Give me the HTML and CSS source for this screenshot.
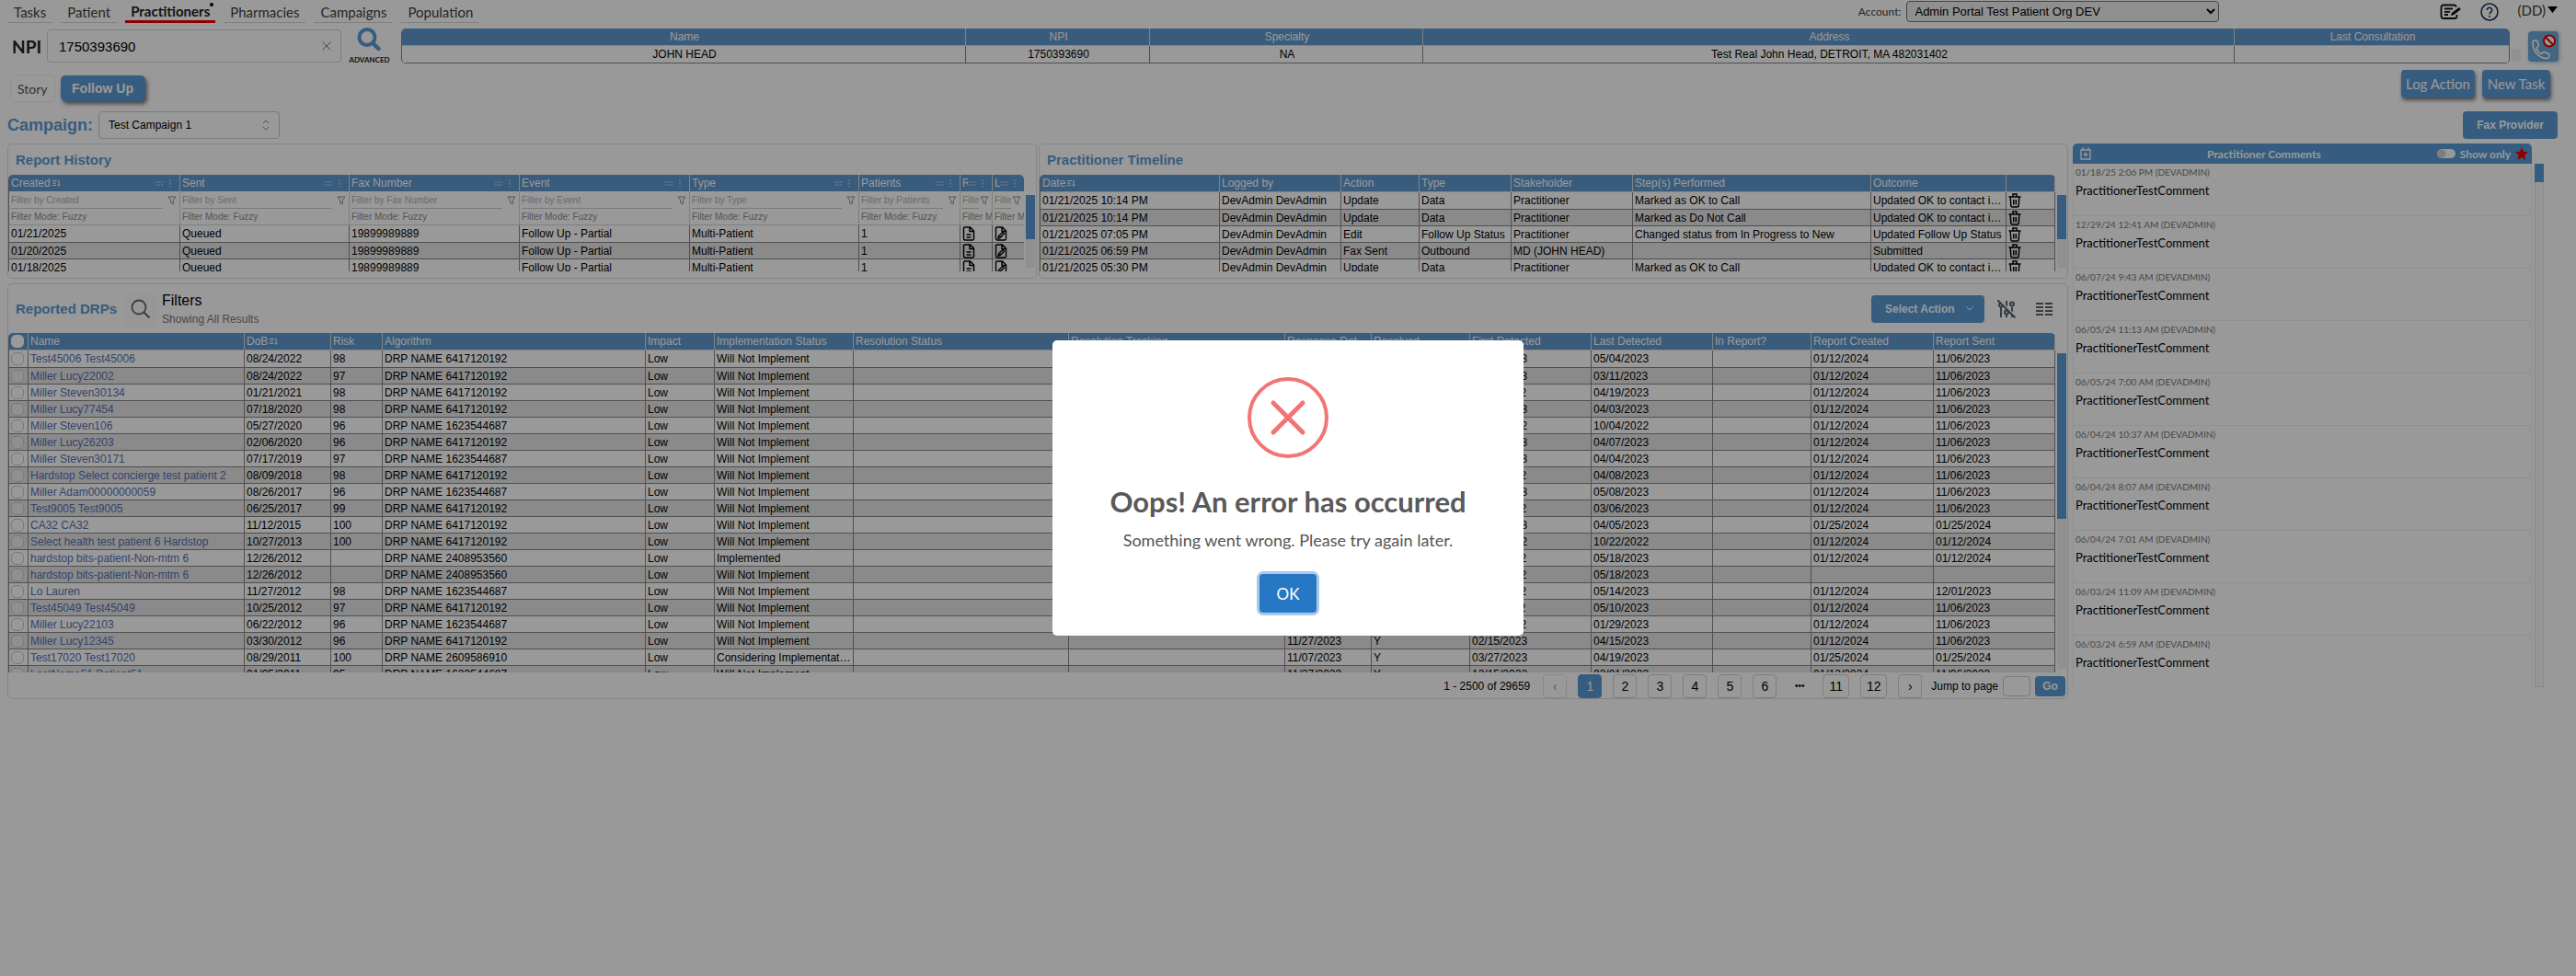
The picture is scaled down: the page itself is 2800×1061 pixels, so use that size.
FILE: index.html
```html
<!DOCTYPE html>
<html lang="en">
<head>
<meta charset="utf-8">
<title>Practitioners - Follow Up</title>
<link rel="stylesheet" href="styles.css">
</head>
<body>
<svg class="sprite" aria-hidden="true">
  <symbol id="i-funnel" viewBox="0 0 10 10"><path d="M1 1h8L6.300 4.800v4l-2.600-1.300V4.800z" fill="none" stroke="currentColor" stroke-linejoin="round"/></symbol>
  <symbol id="i-grip" viewBox="0 0 18 9"><g fill="currentColor"><path d="M0 2h2v2H0zM3 2h2v2H3zM6 2h2v2H6zM0 5h2v2H0zM3 5h2v2H3zM6 5h2v2H6zM15 0h2v2h-2zM15 3.500h2v2h-2zM15 7h2v2h-2z"/></g></symbol>
  <symbol id="i-sort" viewBox="0 0 9 8"><path d="M0 1.500h5M0 4h4M0 6.500h4M7 .5v6.500M5.300 5.500L7 7.300l1.700-1.800" fill="none" stroke="currentColor"/></symbol>
  <symbol id="i-doc" viewBox="0 0 14 16"><path d="M2.500 1h6L12.500 5v8.500a1.500 1.500 0 0 1-1.500 1.500H3A1.500 1.500 0 0 1 1.500 13.500V2A1 1 0 0 1 2.500 1zM8 1v4.500h4.500M4.500 9h5M4.500 12h5" fill="none" stroke="currentColor" stroke-width="1.500"/></symbol>
  <symbol id="i-docpen" viewBox="0 0 14 16"><path d="M2.500 1h6L12.500 5v8.500a1.500 1.500 0 0 1-1.500 1.500H3A1.500 1.500 0 0 1 1.500 13.500V2A1 1 0 0 1 2.500 1zM8 1v4.500h4.500M4 13l.5-2.500L9 6.500l1.500 1.500L6 12.500zM4 13l3-2" fill="none" stroke="currentColor" stroke-width="1.400"/></symbol>
  <symbol id="i-trash" viewBox="0 0 14 16"><path d="M0.500 4h13M5 3.500V1h4v2.500M2.200 4.500l.6 9.200a1.500 1.500 0 0 0 1.500 1.300h5.400a1.500 1.500 0 0 0 1.500-1.300l.6-9.200M5.700 7v5.500M8.300 7v5.500" fill="none" stroke="currentColor" stroke-width="1.500"/></symbol>
</svg>

<header class="topbar">
  <nav class="tabs">
    <a href="#tasks">Tasks</a>
    <a href="#patient">Patient</a>
    <a href="#practitioners" class="active">Practitioners</a>
    <a href="#pharmacies">Pharmacies</a>
    <a href="#campaigns">Campaigns</a>
    <a href="#population">Population</a>
  </nav>
  <div class="account">
    <label for="account">Account:</label>
    <select id="account"><option>Admin Portal Test Patient Org DEV</option></select>
  </div>
  <div class="tools">
    <button class="icon-btn" aria-label="Notes"><svg width="24" height="18" viewBox="0 0 24 18"><path d="M18 3.500A3 3 0 0 0 15.500 1.500H4A2.500 2.500 0 0 0 1.500 4v9.500A2.500 2.500 0 0 0 4 16h12a2.500 2.500 0 0 0 2.500-2.500V12M5 5.500h9M5 8.800h6M5 12h4" fill="none" stroke="#111" stroke-width="1.800"/><path d="M12 13l.8-3L21 4l1.800 2.200L15 12.300z" fill="#111"/></svg></button>
    <button class="icon-btn" aria-label="Help"><svg width="20" height="20" viewBox="0 0 20 20"><circle cx="10" cy="10" r="9" fill="none" stroke="#1d2c55" stroke-width="1.500"/><path d="M7.300 8a2.700 2.700 0 1 1 4.200 2.200c-1 .7-1.500 1-1.500 2.100" fill="none" stroke="#1d2c55" stroke-width="1.500"/><circle cx="10" cy="14.700" r="1" fill="#1d2c55"/></svg></button>
    <button class="user">(DD)<svg width="11" height="7" viewBox="0 0 11 7"><path d="M0 0h11L5.500 7z" fill="#000"/></svg></button>
  </div>
</header>

<section class="lookup">
  <label class="npi-label" for="npi">NPI</label>
  <div class="npi-box"><input id="npi" value="1750393690"><button class="icon-btn" aria-label="Clear"><svg width="10" height="10" viewBox="0 0 10 10"><path d="M.5.5l9 9M9.500.5l-9 9" stroke="#777" fill="none"/></svg></button></div>
  <button class="advanced"><svg width="27" height="26" viewBox="0 0 27 26"><circle cx="11" cy="10.500" r="8.500" fill="none" stroke="#5b9bd5" stroke-width="4"/><path d="M17.500 17l6 6" stroke="#5b9bd5" stroke-width="4.500" stroke-linecap="round"/></svg><span>ADVANCED</span></button>
  <table class="grid summary">
    <colgroup><col style="width:613px"><col style="width:200px"><col style="width:297px"><col style="width:882px"><col style="width:298px"></colgroup>
    <thead><tr><th>Name</th><th>NPI</th><th>Specialty</th><th>Address</th><th>Last Consultation</th></tr></thead>
    <tbody><tr><td>JOHN HEAD</td><td>1750393690</td><td>NA</td><td>Test Real John Head, DETROIT, MA 482031402</td><td></td></tr></tbody>
  </table>
  <span class="stub"></span>
  <button class="phone" aria-label="Do not call"><svg width="33" height="33" viewBox="0 0 33 33"><path d="M5 11c0-1 4-1.500 5-.5l1.500 5c0 1-2.500 2-2.500 3 1 3 3 5 5 6 1 0 2-2.500 3.500-2l5 2c1 1 0 5-1.500 5C11 29.500 4.500 21 5 11z" fill="none" stroke="#fff" stroke-width="1.600" stroke-linejoin="round"/><circle cx="23" cy="10.500" r="6" fill="#fff" stroke="#e00000" stroke-width="2"/><path d="M19 6.500l8 8" stroke="#e00000" stroke-width="2"/></svg></button>
</section>

<section class="modes">
  <button class="mode">Story</button>
  <button class="mode on">Follow Up</button>
  <button class="action push">Log Action</button>
  <button class="action">New Task</button>
</section>

<section class="campaign">
  <label for="campaign">Campaign:</label>
  <div class="select-box"><select id="campaign"><option>Test Campaign 1</option></select><svg width="8" height="12" viewBox="0 0 8 12"><path d="M1 4l3-3 3 3M1 8l3 3 3-3" fill="none" stroke="#888"/></svg></div>
  <button class="solid push fax">Fax Provider</button>
</section>

<main class="board">
  <section class="panel">
    <h2>Report History</h2>
    <div class="pane short">
      <div class="clip">
        <table class="grid" id="history">
          <colgroup><col style="width:186px"><col style="width:184px"><col style="width:185px"><col style="width:185px"><col style="width:184px"><col style="width:110px"><col style="width:35px"><col style="width:35px"></colgroup>
          <thead></thead><tbody></tbody>
        </table>
      </div>
      <div class="bar"><i class="thumb-s"></i></div>
    </div>
  </section>

  <section class="panel">
    <h2>Practitioner Timeline</h2>
    <div class="pane short">
      <div class="clip">
        <table class="grid" id="timeline">
          <colgroup><col style="width:195px"><col style="width:132px"><col style="width:85px"><col style="width:100px"><col style="width:132px"><col style="width:259px"><col style="width:147px"><col style="width:53px"></colgroup>
          <thead><tr><th>Date<svg class="sort"><use href="#i-sort"/></svg></th><th>Logged by</th><th>Action</th><th>Type</th><th>Stakeholder</th><th>Step(s) Performed</th><th>Outcome</th><th></th></tr></thead>
          <tbody></tbody>
        </table>
      </div>
      <div class="bar"><i class="thumb-s"></i></div>
    </div>
  </section>

  <aside class="comments">
    <div class="comments-main">
      <header>
        <button class="icon-btn" aria-label="Add comment"><svg width="12" height="14" viewBox="0 0 12 14"><path d="M1 3h10v10H1zM3 0v3M9 0v3M6 5.500v5M3.500 8h5" fill="none" stroke="#fff" stroke-width="1.300"/></svg></button>
        <strong>Practitioner Comments</strong>
        <label><input type="checkbox" class="toggle">Show only</label>
        <svg width="14" height="14" viewBox="0 0 14 14"><path d="M7 0l2 4.800 5 .4-3.800 3.300L11.400 14 7 11.100 2.600 14l1.200-5.500L0 5.200l5-.4z" fill="#f00000"/></svg>
      </header>
      <ul id="comments"></ul>
    </div>
    <div class="comments-bar"><i></i></div>
  </aside>

  <section class="panel wide">
    <div class="drp-head">
      <h2>Reported DRPs</h2>
      <button class="search" aria-label="Search"><svg width="22" height="22" viewBox="0 0 22 22"><circle cx="9" cy="9" r="7.500" fill="none" stroke="#666" stroke-width="1.800"/><path d="M14.500 14.500l6 6" stroke="#666" stroke-width="2"/></svg></button>
      <div class="filters"><b>Filters</b><span>Showing All Results</span></div>
      <button class="solid push select-action">Select Action<svg width="8" height="5" viewBox="0 0 8 5"><path d="M.5.5L4 4 7.500.5" fill="none" stroke="#fff"/></svg></button>
      <button class="icon-btn" aria-label="Clear filters"><svg width="20" height="20" viewBox="0 0 20 20" fill="none" stroke="#5c636b" stroke-width="2"><path d="M4 7.500V19M4 1v1M10 1v10M10 16v3M16 8v11"/><circle cx="4" cy="5.500" r="2"/><circle cx="10" cy="13.500" r="2"/><circle cx="16" cy="4.500" r="2"/><path d="M2 0l18 18" stroke="#fff"/><path d="M0 0l19.500 19.500"/></svg></button>
      <button class="icon-btn" aria-label="Columns"><svg width="18" height="14" viewBox="0 0 18 14"><path d="M0 1h8M0 5h8M0 9h8M0 13h8M10 1h8M10 5h8M10 9h8M10 13h8" stroke="#5c636b" stroke-width="2"/></svg></button>
    </div>
    <div class="pane tall">
      <div class="clip">
        <table class="grid" id="drps">
          <colgroup><col style="width:21px"><col style="width:235px"><col style="width:94px"><col style="width:56px"><col style="width:286px"><col style="width:75px"><col style="width:151px"><col style="width:234px"><col style="width:235px"><col style="width:94px"><col style="width:107px"><col style="width:132px"><col style="width:132px"><col style="width:107px"><col style="width:133px"><col style="width:132px"></colgroup>
          <thead><tr><th><input type="checkbox" aria-label="Select all"></th><th>Name</th><th>DoB<svg class="sort"><use href="#i-sort"/></svg></th><th>Risk</th><th>Algorithm</th><th>Impact</th><th>Implementation Status</th><th>Resolution Status</th><th>Resolution Tracking</th><th>Response Dat</th><th>Resolved</th><th>First Detected</th><th>Last Detected</th><th>In Report?</th><th>Report Created</th><th>Report Sent</th></tr></thead>
          <tbody></tbody>
        </table>
      </div>
      <div class="bar"><i class="thumb-l"></i></div>
    </div>
    <nav class="pager" aria-label="Pages">
      <span class="range">1 - 2500 of 29659</span>
      <button class="dim" aria-label="Previous">‹</button>
      <button class="current">1</button><button>2</button><button>3</button><button>4</button><button>5</button><button>6</button>
      <span class="dots">•••</span>
      <button class="two">11</button><button class="two">12</button>
      <button aria-label="Next">›</button>
      <label for="jump">Jump to page</label><input id="jump"><button class="go">Go</button>
    </nav>
  </section>
</main>

<div class="overlay">
  <div class="modal" role="alertdialog" aria-labelledby="err-title" aria-describedby="err-text">
    <svg width="88" height="88" viewBox="0 0 88 88"><circle cx="44" cy="44" r="42" fill="none" stroke="#f27474" stroke-width="4"/><path d="M28 28l32 32M60 28L28 60" stroke="#f27474" stroke-width="5" stroke-linecap="round"/></svg>
    <h1 id="err-title">Oops! An error has occurred</h1>
    <p id="err-text">Something went wrong. Please try again later.</p>
    <button>OK</button>
  </div>
</div>
<script src="app.js"></script>
</body>
</html>
```
FILE: styles.css
```css
* { box-sizing: border-box; }
body { margin: 0; background: #fff; color: #000; font: 12px "Liberation Sans", Arial, sans-serif; }
button, input, select { font: inherit; color: inherit; margin: 0; }
button { border: 0; background: none; padding: 0; }
h1, h2, p, ul { margin: 0; padding: 0; }
svg { display: block; flex: none; }
.sprite { position: absolute; width: 0; height: 0; }
.push { margin-left: auto; }
.icon-btn { display: flex; align-items: center; }

/* top navigation */
.topbar { display: flex; align-items: flex-start; height: 31px; padding: 0 20px 0 8px; font-family: Lato, sans-serif; }
.tabs { display: flex; gap: 9px; font-size: 15px; }
.tabs a { height: 25px; padding: 0 7px; line-height: 26px; color: #404040; text-decoration: none; border-bottom: 1px solid #d6d6d6; }
.tabs a.active { position: relative; line-height: 24px; padding: 0 6px; font-weight: 700; color: #222; border-bottom: 3px solid #f00000; }
.tabs a.active::after { content: ""; position: absolute; top: 3px; right: 2px; width: 4px; height: 4px; border-radius: 50%; background: #000; }
.account { display: flex; align-items: center; gap: 6px; margin-left: auto; height: 25px; color: #404040; }
.account select { width: 340px; height: 23px; padding: 0 4px; border: 1px solid #767676; border-radius: 4px; background: #efefef; color: #000; font: 13px "Liberation Sans", Arial, sans-serif; }
.tools { display: flex; align-items: center; gap: 20px; height: 25px; margin-left: 240px; }
.user { display: flex; align-items: center; gap: 2px; height: 20px; margin-bottom: 4px; font-size: 15px; color: #404040; }

/* practitioner lookup */
.lookup { display: flex; align-items: center; height: 38px; padding: 0 21px 0 13px; }
.npi-label { flex: none; width: 38px; font: 700 19px Lato, sans-serif; color: #222; }
.npi-box { flex: none; display: flex; align-items: center; width: 320px; height: 36px; padding: 0 10px 0 12px; border: 1px solid #d0d4d9; border-radius: 4px; }
.npi-box input { flex: 1; min-width: 0; padding: 0; border: 0; outline: 0; background: none; font-size: 15px; }
.advanced { flex: none; display: flex; flex-direction: column; align-items: center; width: 65px; padding-right: 4px; gap: 4px; font: 700 8px/10px Lato, sans-serif; color: #222; }
.summary { flex: 1; border-radius: 5px; overflow: hidden; border-right: 1px solid #858585; }
table.summary th, table.summary td { text-align: center; }
table.summary th:last-child, table.summary td:last-child { border-right: 0; }
.stub { flex: none; width: 10px; height: 14px; margin: 20px 8px 0 2px; background: #f0f0f0; }
.phone { flex: none; border-radius: 4px; background: #6fa8d8; box-shadow: 1px 1px 4px #9cc4e8; }

.modes { display: flex; align-items: center; gap: 6px; height: 44px; padding: 10px 28px 0 11px; }
.mode { height: 30px; padding: 0 7px; border: 1px solid #eee; border-radius: 5px; font: 14px Lato, sans-serif; color: #555; }
.mode.on { height: 28px; width: 92px; border: 0; background: #5b9bd5; color: #fff; font: 700 14px "Liberation Sans", Arial, sans-serif; box-shadow: 2px 3px 4px #777; }
.action { height: 30px; width: 80px; margin-bottom: 10px; border-radius: 4px; background: #5b9bd5; color: #fff; font: 15px Lato, sans-serif; box-shadow: 1px 3px 4px #777; }
.action:last-child { width: 74px; margin-left: 2px; }

.campaign { display: flex; align-items: center; gap: 6px; height: 43px; padding: 3px 20px 0 8px; }
.campaign label { font-size: 18px; font-weight: 700; color: #5b9bd5; }
.select-box { display: flex; align-items: center; width: 197px; height: 30px; padding: 0 10px; border: 1px solid #ccc; border-radius: 4px; }
.select-box select { flex: 1; border: 0; background: none; appearance: none; padding: 0; }
.solid { height: 30px; border-radius: 4px; background: #5b9bd5; color: #fff; font-weight: 700; }
.fax { width: 103px; }

/* panels */
.board { display: grid; grid-template-columns: 1fr 1fr 515px; column-gap: 2px; row-gap: 5px; padding: 0 35px 0 8px; }
.panel { min-width: 0; border: 1px solid #dedede; border-radius: 5px; }
.wide { grid-column: 1 / 3; }
.panel h2 { padding-left: 8px; font-size: 15px; line-height: 33px; color: #5b9bd5; }
.pane { display: flex; gap: 2px; padding-right: 1px; }
.pane .clip { flex: 1; min-width: 0; overflow: hidden; border-radius: 5px 5px 0 0; }
.short { height: 112px; }
.short .clip { height: 105px; }
.short .bar { height: 79px; margin-top: 22px; }
.tall { height: 369px; }
.tall .bar { margin: 22px 0 4px; }
.bar { width: 10px; background: #f1f1f1; }
.bar i { display: block; background: #5b9bd5; }
.thumb-s { height: 48px; }
.thumb-l { height: 180px; }

/* data tables */
.grid { width: 100%; table-layout: fixed; border-collapse: separate; border-spacing: 0; border-left: 1px solid #858585; line-height: 14px; }
.grid th, .grid td { height: 18px; padding: 0 0 0 2px; text-align: left; white-space: nowrap; overflow: hidden; text-overflow: ellipsis; border-right: 1px solid #858585; border-bottom: 1px solid #858585; }
.grid th { height: 19px; font-weight: 400; color: #fff; background: #6099cf; border-color: #dcdcdc; }
.grid tbody tr:first-child td { height: 19px; }
.grid tbody tr:nth-child(even) td { background: #e6e6e6; }
.grid td svg { width: 14px; height: 16px; }
.grid td a { color: #5570b4; text-decoration: none; }
.grid .sort { display: inline-block; width: 9px; height: 8px; margin-left: 2px; }
.grid input[type=checkbox] { display: block; width: 14px; height: 14px; appearance: none; border: 1px solid #ccc; border-radius: 5px; background: #fff; }
.grid tbody tr:nth-child(even) input { background: #f0f0f0; }
.grid thead input[type=checkbox] { border-color: #fff; }
#timeline td:nth-child(7) { padding-right: 4px; }
#drps td:nth-child(7) { padding-right: 2px; }
.th { display: flex; align-items: center; height: 18px; }
.th span { flex: 0 1 auto; min-width: 0; overflow: hidden; }
.th .grip { width: 18px; height: 9px; margin: 0 8px 0 auto; color: #8dbbe6; }
#history .heads th { height: 18px; border-bottom: 0; }
#history .filter td { height: 37px; padding: 0; vertical-align: top; border-color: #d4d4d4; color: #8c8c8c; font-size: 10px; }
.filter div { display: flex; align-items: center; }
.filter input { flex: 1; min-width: 0; height: 19px; margin-left: 2px; padding: 0; border: 0; border-bottom: 1px solid #ccc; background: none; }
.filter input::placeholder { color: #b0b0b0; }
.filter td .fun { width: 10px; height: 10px; margin: 0 3px 0 5px; }
.filter td:nth-child(n+7) .fun { margin-left: 1px; }
.filter p { height: 17px; padding-left: 2px; line-height: 17px; overflow: hidden; }

/* reported DRPs */
.drp-head { display: flex; align-items: center; height: 53px; padding-right: 16px; }
.search { display: flex; align-items: center; justify-content: center; width: 39px; height: 40px; margin: 0 4px 0 6px; border-radius: 5px; background: #fafcfa; }
.filters { display: flex; flex-direction: column; gap: 4px; color: #777; }
.filters b { font-size: 16px; font-weight: 400; color: #000; }
.select-action { display: flex; align-items: center; justify-content: space-between; width: 123px; padding: 0 12px 0 15px; }
.drp-head .icon-btn { margin-left: 14px; }
.drp-head .icon-btn:last-child { margin-left: 22px; }
.pager { display: flex; align-items: center; justify-content: flex-end; gap: 12px; height: 28px; padding: 1px 2px 0 0; }
.pager button { width: 26px; height: 26px; border: 1px solid #d4d4d4; border-radius: 4px; font-size: 14px; }
.pager button.two { width: 29px; }
.pager button.dim { color: #999; border-color: #e4e4e4; }
.pager button.current { background: #5b9bd5; border-color: #5b9bd5; color: #fff; }
.range { margin-right: 2px; }
.dots { width: 26px; text-align: center; font-size: 10px; }
.pager label { margin: 0 -7px 0 -2px; }
#jump { width: 30px; height: 22px; border: 1px solid #ccc; border-radius: 4px; }
.pager button.go { width: 33px; height: 22px; margin-left: -7px; border: 0; background: #5b9bd5; color: #fff; font-size: 12px; font-weight: 700; }

/* comments */
.comments { grid-column: 3; grid-row: 1 / 3; display: flex; gap: 3px; margin-left: 3px; font-family: Lato, sans-serif; }
.comments-main { flex: 1; }
.comments header { display: flex; align-items: center; height: 22px; padding: 0 4px 0 8px; border-radius: 5px 5px 0 0; background: #5b9bd5; color: #fff; }
.comments header strong { flex: 1; text-align: center; }
.comments header label { display: flex; align-items: center; gap: 5px; margin-right: 5px; font-weight: 700; }
.toggle { appearance: none; width: 20px; height: 10px; border-radius: 5px; background: radial-gradient(circle at 5px 5px, #d0d0d0 4px, #fff 5px); }
.comments ul { list-style: none; height: 569px; overflow: hidden; border: 1px solid #f0f0f0; border-width: 0 1px; }
.comments li { height: 57px; border-bottom: 1px solid #f0f0f0; padding: 3px 0 0 2px; font-size: 13px; line-height: 16px; }
.comments li:last-child { border: 0; }
.comments time { display: block; margin-bottom: 5px; font-size: 10px; line-height: 13px; color: #777; }
.comments-bar { width: 10px; height: 569px; margin-top: 22px; border: 1px solid #e6e6e6; background: #fafafa; }
.comments-bar i { display: block; height: 20px; margin: -1px; background: #5b9bd5; }

/* error dialog */
.overlay { position: fixed; inset: 0; display: flex; align-items: center; justify-content: center; background: rgba(0, 0, 0, .4); }
.modal { display: flex; flex-direction: column; align-items: center; width: 512px; padding: 40px 20px 25px; border-radius: 5px; background: #fff; color: #545454; font-family: Lato, sans-serif; }
.modal h1 { margin-top: 28px; font-size: 31px; font-weight: 700; line-height: 38px; color: #595959; }
.modal p { margin-top: 12px; font-size: 18px; line-height: 22px; }
.modal button { width: 62px; height: 42px; margin-top: 26px; border-radius: 4px; background: #2778c4; color: #fff; font-size: 17px; box-shadow: 0 0 0 3px #a9c9e7; }
```
FILE: app.js
```js
const use = (id, cls = '') => `<svg class="${cls}"><use href="#${id}"/></svg>`;

// Report History
const historyCols = ['Created', 'Sent', 'Fax Number', 'Event', 'Type', 'Patients', 'Report', 'Letter'];
document.querySelector('#history thead').innerHTML = '<tr class="heads">' + historyCols.map((c, i) =>
  `<th><div class="th"><span>${c}</span>${i ? '' : use('i-sort', 'sort')}${use('i-grip', 'grip')}</div></th>`).join('') + '</tr>' +
  '<tr class="filter">' + historyCols.map(c =>
  `<td><div><input placeholder="Filter by ${c}" aria-label="Filter by ${c}">${use('i-funnel', 'fun')}</div><p>Filter Mode: Fuzzy</p></td>`).join('') + '</tr>';
document.querySelector('#history tbody').innerHTML = ['01/21/2025', '01/20/2025', '01/18/2025'].map(d =>
  `<tr><td>${d}</td><td>Queued</td><td>19899989889</td><td>Follow Up - Partial</td><td>Multi-Patient</td><td>1</td><td>${use('i-doc')}</td><td>${use('i-docpen')}</td></tr>`).join('');

// Practitioner Timeline
const contact = 'Updated OK to contact information';
document.querySelector('#timeline tbody').innerHTML = [
  ['01/21/2025 10:14 PM', 'Update', 'Data', 'Practitioner', 'Marked as OK to Call', contact],
  ['01/21/2025 10:14 PM', 'Update', 'Data', 'Practitioner', 'Marked as Do Not Call', contact],
  ['01/21/2025 07:05 PM', 'Edit', 'Follow Up Status', 'Practitioner', 'Changed status from In Progress to New', 'Updated Follow Up Status'],
  ['01/21/2025 06:59 PM', 'Fax Sent', 'Outbound', 'MD (JOHN HEAD)', '', 'Submitted'],
  ['01/21/2025 05:30 PM', 'Update', 'Data', 'Practitioner', 'Marked as OK to Call', contact],
].map(([d, ...r]) => `<tr><td>${d}</td><td>DevAdmin DevAdmin</td>` + r.map(c => `<td>${c}</td>`).join('') + `<td>${use('i-trash')}</td></tr>`).join('');

// Reported DRPs: name, DoB, risk, algorithm, status, response, resolved, first, last, created, sent
const W = 'Will Not Implement';
document.querySelector('#drps tbody').innerHTML = [
  ['Test45006 Test45006', '08/24/2022', 98, 6417120192, W, '11/07/2023', 'Y', '02/13/2023', '05/04/2023', '01/12/2024', '11/06/2023'],
  ['Miller Lucy22002', '08/24/2022', 97, 6417120192, W, '11/07/2023', 'Y', '02/13/2023', '03/11/2023', '01/12/2024', '11/06/2023'],
  ['Miller Steven30134', '01/21/2021', 98, 6417120192, W, '11/07/2023', 'Y', '11/13/2022', '04/19/2023', '01/12/2024', '11/06/2023'],
  ['Miller Lucy77454', '07/18/2020', 98, 6417120192, W, '11/07/2023', 'Y', '02/13/2023', '04/03/2023', '01/12/2024', '11/06/2023'],
  ['Miller Steven106', '05/27/2020', 96, 1623544687, W, '11/07/2023', 'Y', '10/04/2022', '10/04/2022', '01/12/2024', '11/06/2023'],
  ['Miller Lucy26203', '02/06/2020', 96, 6417120192, W, '11/07/2023', 'Y', '02/13/2023', '04/07/2023', '01/12/2024', '11/06/2023'],
  ['Miller Steven30171', '07/17/2019', 97, 1623544687, W, '11/07/2023', 'Y', '02/13/2023', '04/04/2023', '01/12/2024', '11/06/2023'],
  ['Hardstop Select concierge test patient 2', '08/09/2018', 98, 6417120192, W, '11/07/2023', 'Y', '11/13/2022', '04/08/2023', '01/12/2024', '11/06/2023'],
  ['Miller Adam00000000059', '08/26/2017', 96, 1623544687, W, '11/07/2023', 'Y', '02/13/2023', '05/08/2023', '01/12/2024', '11/06/2023'],
  ['Test9005 Test9005', '06/25/2017', 99, 6417120192, W, '11/07/2023', 'Y', '11/13/2022', '03/06/2023', '01/12/2024', '11/06/2023'],
  ['CA32 CA32', '11/12/2015', 100, 6417120192, W, '11/07/2023', 'Y', '02/13/2023', '04/05/2023', '01/25/2024', '01/25/2024'],
  ['Select health test patient 6 Hardstop', '10/27/2013', 100, 6417120192, W, '11/07/2023', 'Y', '10/22/2022', '10/22/2022', '01/12/2024', '01/12/2024'],
  ['hardstop bits-patient-Non-mtm 6', '12/26/2012', '', 2408953560, 'Implemented', '11/07/2023', 'Y', '11/13/2022', '05/18/2023', '01/12/2024', '01/12/2024'],
  ['hardstop bits-patient-Non-mtm 6', '12/26/2012', '', 2408953560, W, '11/07/2023', 'Y', '11/13/2022', '05/18/2023', '', ''],
  ['Lo Lauren', '11/27/2012', 98, 1623544687, W, '11/07/2023', 'Y', '11/13/2022', '05/14/2023', '01/12/2024', '12/01/2023'],
  ['Test45049 Test45049', '10/25/2012', 97, 6417120192, W, '11/07/2023', 'Y', '11/11/2022', '05/10/2023', '01/12/2024', '11/06/2023'],
  ['Miller Lucy22103', '06/22/2012', 96, 1623544687, W, '11/07/2023', 'Y', '11/13/2022', '01/29/2023', '01/12/2024', '11/06/2023'],
  ['Miller Lucy12345', '03/30/2012', 96, 6417120192, W, '11/27/2023', 'Y', '02/15/2023', '04/15/2023', '01/12/2024', '11/06/2023'],
  ['Test17020 Test17020', '08/29/2011', 100, 2609586910, 'Considering Implementation', '11/07/2023', 'Y', '03/27/2023', '04/19/2023', '01/25/2024', '01/25/2024'],
  ['LastName51 Patient51', '01/05/2011', 95, 1623544687, W, '11/27/2023', 'Y', '12/15/2022', '03/01/2023', '01/12/2024', '11/06/2023'],
].map(([name, dob, risk, alg, status, resp, done, first, last, created, sent]) =>
  `<tr><td><input type="checkbox" aria-label="Select ${name}"></td><td><a href="#drp">${name}</a></td>` +
  [dob, risk, 'DRP NAME ' + alg, 'Low', status, '', '', resp, done, first, last, '', created, sent].map(c =>
    `<td>${c}</td>`).join('') + '</tr>').join('');

// Practitioner Comments
document.querySelector('#comments').innerHTML = ['01/18/25 2:06 PM', '12/29/24 12:41 AM', '06/07/24 9:43 AM', '06/05/24 11:13 AM',
  '06/05/24 7:00 AM', '06/04/24 10:37 AM', '06/04/24 8:07 AM', '06/04/24 7:01 AM', '06/03/24 11:09 AM', '06/03/24 6:59 AM'
].map(t => `<li><time>${t} (DEVADMIN)</time>PractitionerTestComment</li>`).join('');
```
